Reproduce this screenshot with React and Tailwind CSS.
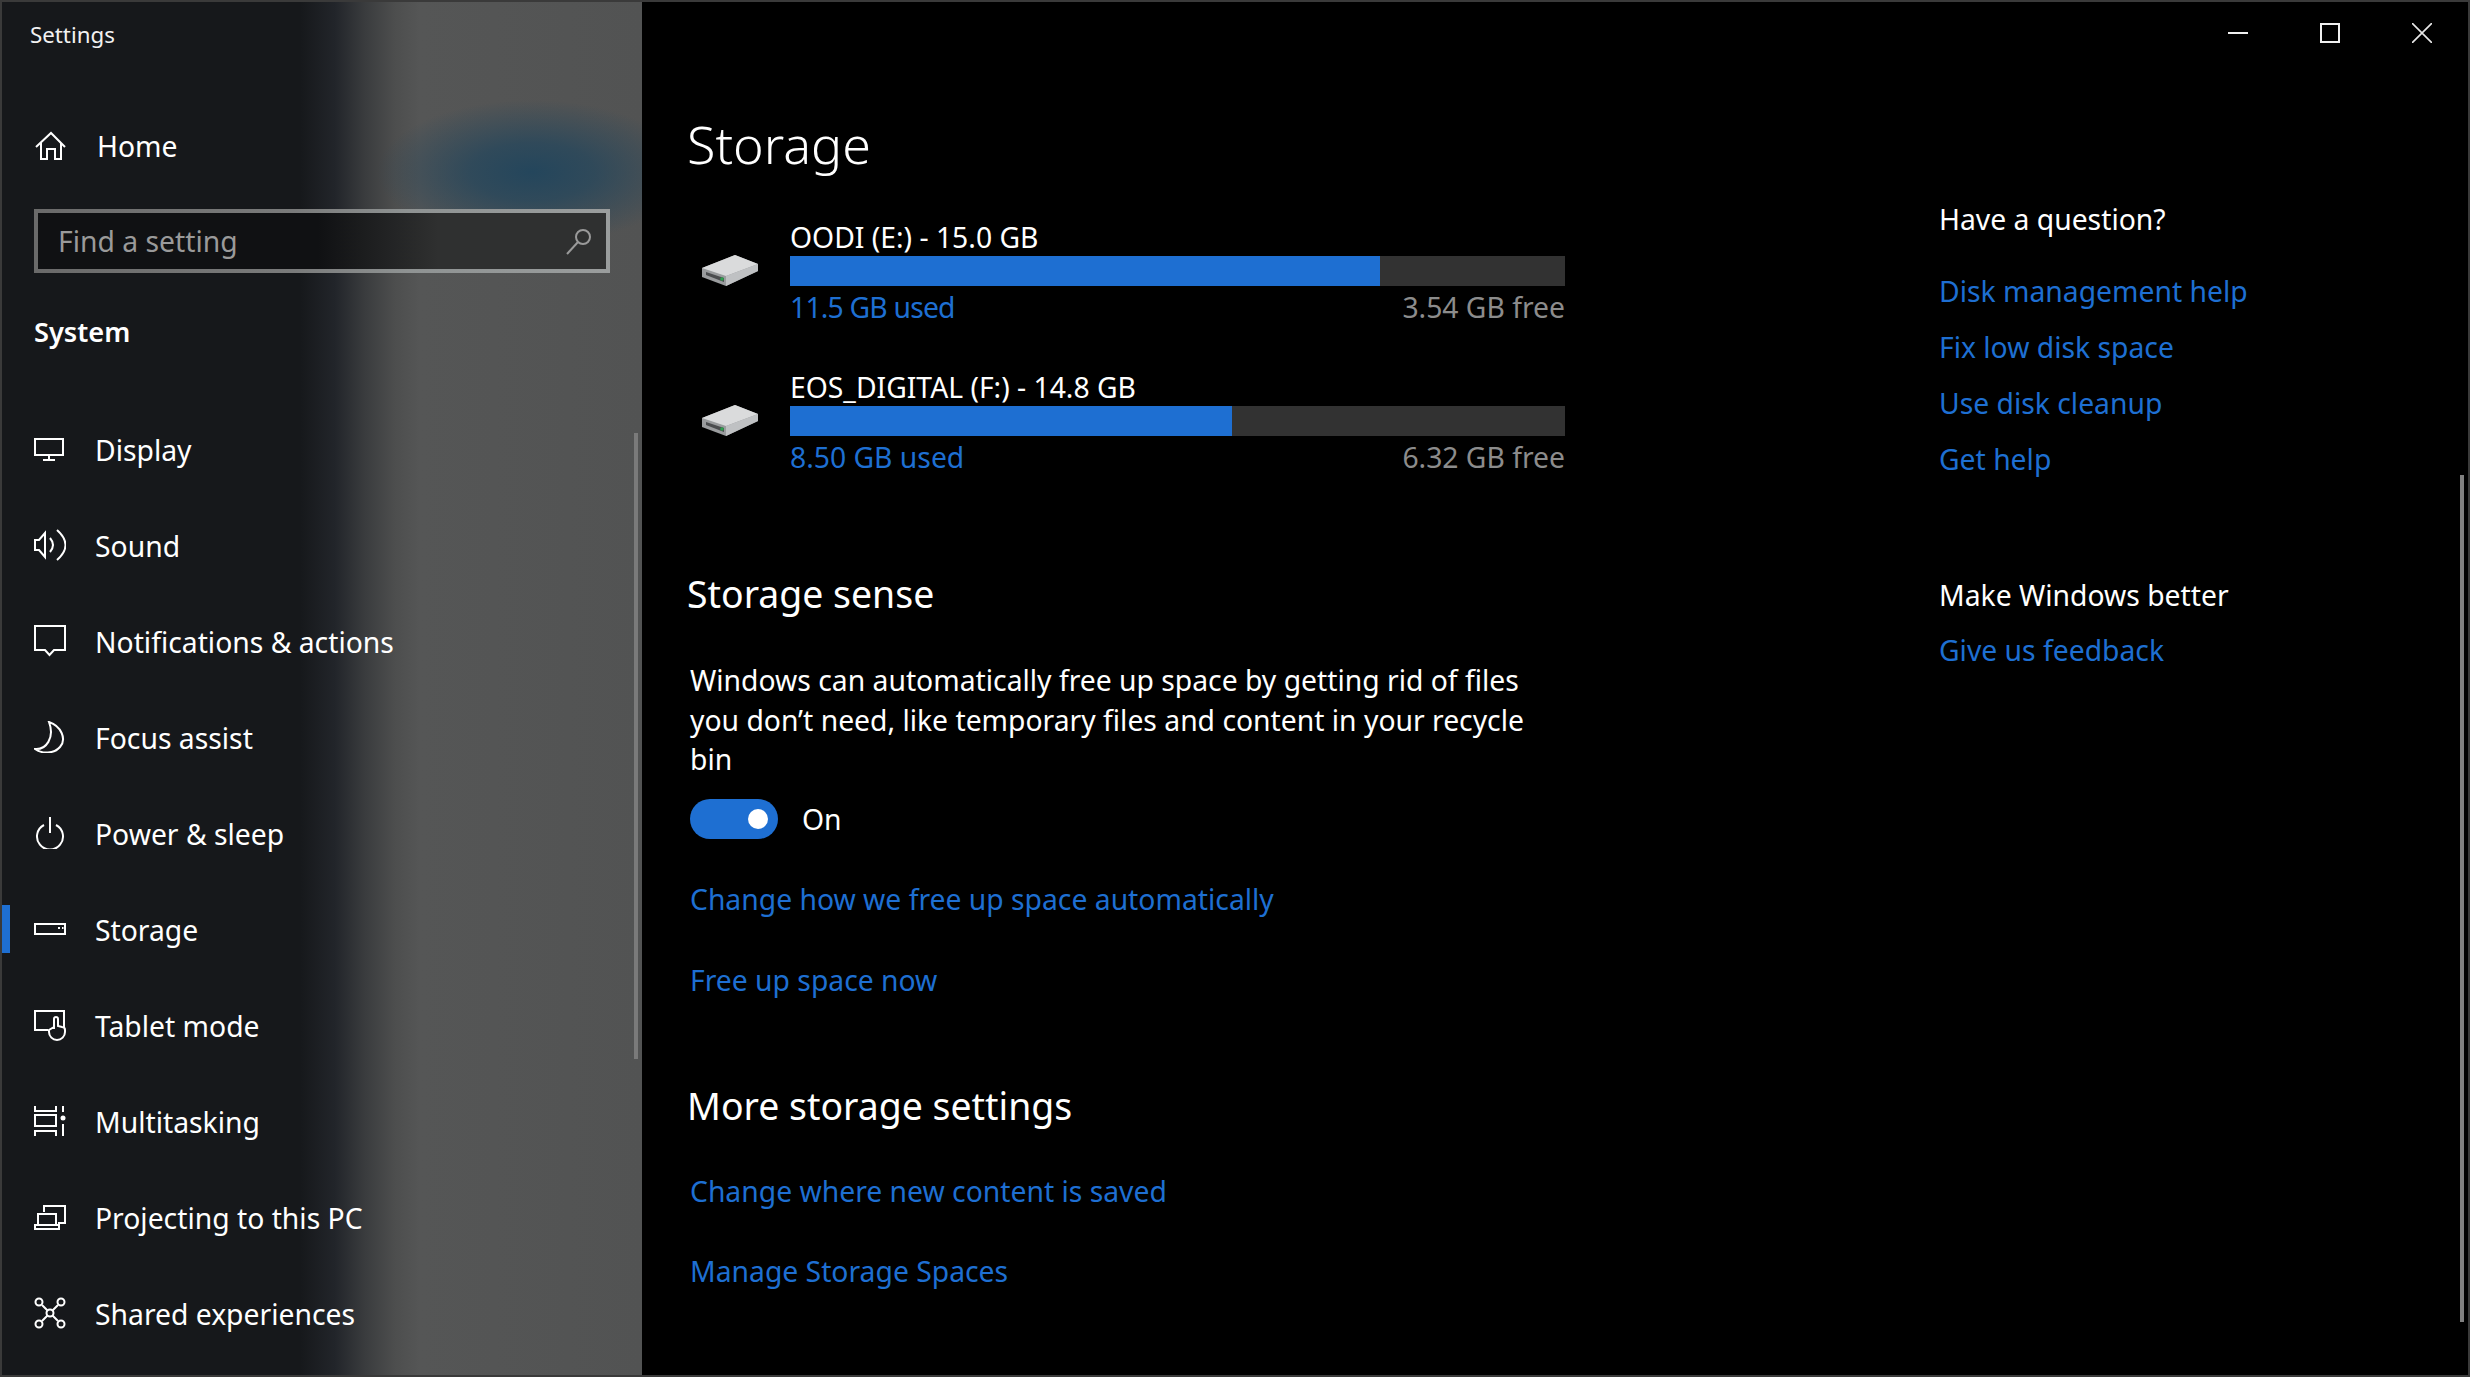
const I = ({ children }) => (
  <svg width="32" height="32" viewBox="0 0 32 32" fill="none" stroke="#fff" strokeWidth="2" className="shrink-0">{children}</svg>
);

const icons = {
  Home: <path d="M2 17 17 3l14 14M7 13v16h6V19h8v10h6V13" />,
  Display: <><path d="M1 6h28v16H1zM15 22v5M9 27h12" /></>,
  Sound: <><path d="M1 11h4l6-7v24l-6-7H1z" /><path d="M16 9q6 7 0 14M23 1q17 15 0 30" /></>,
  Notifications: <path d="M1 1h30v24H20l-4.500 5-4.500-5H1z" />,
  Focus: <path d="M15 1c12 4 18 17 11 25-6 7-18 7-25 2 11 1 20-11 14-27z" />,
  Power: <path d="M10 8a13 13 0 1 0 12 0M16 0v16" />,
  Storage: <><path d="M1 11h30v10H1z" /><path d="M24 15h2M28 15h1.500" /></>,
  Tablet: <><path d="M14 21H1V2h29v17" /><path d="M20 20V10a2 2 0 0 1 4 0v7l4 1a3 3 0 0 1 3 3v2a8 8 0 0 1-16 0v-2l5-3z" fill="#17191c" /></>,
  Multitasking: <><path d="M1 1v5h21V1M1 10h21v11H1zM1 31v-5h21v5M29 1v6M29 19v12" /><circle cx="29" cy="13" r="2.500" fill="#fff" stroke="none" /></>,
  Projecting: <><path d="M10 11V5h21v17h-7M4 24V13h18v11M1 24h24v4H1z" /></>,
  Shared: <><circle cx="5" cy="5" r="3.500" /><circle cx="27" cy="5" r="3.500" /><circle cx="5" cy="27" r="3.500" /><circle cx="27" cy="27" r="3.500" /><circle cx="16" cy="16" r="3.500" /><path d="m8 8 5.500 5.500M24 8l-5.500 5.500M8 24l5.500-5.500M24 24l-5.500-5.500" /></>,
};

const nav = [
  ["Display", "Display"],
  ["Sound", "Sound"],
  ["Notifications", "Notifications & actions"],
  ["Focus", "Focus assist"],
  ["Power", "Power & sleep"],
  ["Storage", "Storage"],
  ["Tablet", "Tablet mode"],
  ["Multitasking", "Multitasking"],
  ["Projecting", "Projecting to this PC"],
  ["Shared", "Shared experiences"],
];

const Drive = () => (
  <svg width="56" height="31" viewBox="0 0 56 31" className="mb-[4px] shrink-0">
    <path d="M0 13 33 0l23 9v7L24 31 0 22z" fill="#9a9c9e" />
    <path d="M0 13 33 0l23 9-32 12z" fill="#dadbdc" />
    <path d="M24 21 56 9v7L24 31z" fill="#bfc1c3" />
    <path d="M4 17l18 6v4L4 20z" fill="#4a4c4e" />
    <circle cx="20" cy="24" r="1.800" fill="#2fa04f" />
  </svg>
);

const Bar = ({ name, used, free, pct, usedCls }) => (
  <div className="flex items-center pl-[15px]">
    <Drive />
    <div className="ml-[32px] w-[775px]">
      <div className="h-[36px] leading-[36px] text-white">{name}</div>
      <div className="mt-px h-[30px] bg-[#323232]">
        <div className="h-full bg-[#1e6fd2]" style={{ width: pct + "%" }} />
      </div>
      <div className="mt-[3px] flex h-[36px] justify-between leading-[36px]">
        <span className={"text-[#1e6fd2] " + usedCls}>{used}</span>
        <span className="text-[#8c8c8c]">{free}</span>
      </div>
    </div>
  </div>
);

const A = ({ children, cls }) => (
  <div className={"h-[40px] leading-[40px] whitespace-nowrap text-[#1e6fd2] " + cls}>{children}</div>
);

export default function App() {
  return (
    <div className="box-border flex h-[1377px] w-[2470px] overflow-hidden border-2 border-[#3a3a3a] bg-black text-[28.300px] text-white [font-family:'Noto_Sans',sans-serif]">
      <aside className="relative h-full w-[640px] shrink-0 overflow-hidden bg-[radial-gradient(ellipse_155px_72px_at_530px_170px,#24465c_0%,rgba(36,70,92,0.75)_40%,rgba(36,70,92,0)_100%),linear-gradient(90deg,#16181b_0,#16181b_298px,#22252a_333px,#3a3c3e_363px,#4d4e4e_393px,#555656_418px,#525353_640px)]">
        <div className="flex h-[66px] items-center pl-[28px] text-[22.300px] text-[#f2f2f2]">Settings</div>
        <div className="mt-[53px] flex h-[50px] items-center gap-[31px] pl-[32px]">
          <I>{icons.Home}</I>
          <span>Home</span>
        </div>
        <div className="mx-[32px] mt-[38px] h-[64px] bg-[linear-gradient(90deg,#6a6a6a,#7a7b7b_45%,#8f9393_65%,#9a9d9d)] p-1">
          <div className="flex h-full items-center justify-between bg-[linear-gradient(90deg,#101113_0,#101113_280px,#2f3030_400px)] pl-[20px] pr-[14px] text-[#9a9a9a]">
            <span>Find a setting</span>
            <svg width="26" height="27" viewBox="0 0 26 27" fill="none" stroke="#9a9a9a" strokeWidth="2">
              <circle cx="17" cy="9" r="7" />
              <path d="M12 14 1 26" />
            </svg>
          </div>
        </div>
        <div className="mt-[39px] h-[40px] pl-[32px] text-[27.200px] font-semibold leading-[40px]">System</div>
        <div className="mt-[49px]">
          {nav.map(([k, label]) => (
            <div key={k} className="relative flex h-[96px] items-center gap-[29px] pl-[32px]">
              {k === "Storage" && <div className="absolute left-0 top-[24px] h-[48px] w-[8px] bg-[#1e6fd2]" />}
              <I>{icons[k]}</I>
              <span className="pt-[3px]">{label}</span>
            </div>
          ))}
        </div>
        <div className="absolute left-[632px] top-[431px] h-[626px] w-1 bg-[#7a7a7a]" />
      </aside>

      <main className="relative flex-1">
        <div className="flex h-[62px] items-center justify-end gap-[72px] pr-[36px]">
          <div className="h-[2px] w-[20px] bg-[#f0f0f0]" />
          <div className="box-border h-[20px] w-[20px] border-2 border-[#f0f0f0]" />
          <svg width="20" height="20" viewBox="0 0 20 20" stroke="#e8e8e8" strokeWidth="1.600"><path d="m0 0 20 20M20 0 0 20" /></svg>
        </div>
        <div className="flex">
          <div className="w-[1297px] pl-[45px]">
            <div className="mt-[50px] h-[60px] text-[52px] font-light leading-[60px]">Storage</div>
            <div className="mt-[45px]">
              <Bar name="OODI (E:) - 15.0 GB" used="11.5 GB used" free="3.54 GB free" pct={76.1} usedCls="tracking-[-0.8px]" />
            </div>
            <div className="mt-[44px]">
              <Bar name="EOS_DIGITAL (F:) - 14.8 GB" used="8.50 GB used" free="6.32 GB free" pct={57} usedCls="" />
            </div>
            <div className="mt-[94px] h-[50px] text-[37.400px] leading-[50px]">Storage sense</div>
            <div className="ml-[3px] mt-[42px] whitespace-nowrap leading-[39.500px]">
              Windows can automatically free up space by getting rid of files<br />
              you don’t need, like temporary files and content in your recycle<br />
              bin
            </div>
            <div className="ml-[3px] mt-[18px] flex items-center gap-[24px]">
              <div className="relative h-[40px] w-[88px] rounded-full bg-[#1e6fd2]">
                <div className="absolute right-[10px] top-[10px] h-[20px] w-[20px] rounded-full bg-white" />
              </div>
              <span>On</span>
            </div>
            <A cls="ml-[3px] mt-[39px]">Change how we free up space automatically</A>
            <A cls="ml-[3px] mt-[41px]">Free up space now</A>
            <div className="mt-[81px] h-[50px] text-[37.400px] leading-[50px]">More storage settings</div>
            <A cls="ml-[3px] mt-[40px]">Change where new content is saved</A>
            <A cls="ml-[3px] mt-[40px]">Manage Storage Spaces</A>
          </div>
          <div>
            <div className="mt-[135px] h-[40px] leading-[40px]">Have a question?</div>
            <div className="mt-[32px] flex flex-col gap-[16px]">
              <A>Disk management help</A>
              <A>Fix low disk space</A>
              <A>Use disk cleanup</A>
              <A>Get help</A>
            </div>
            <div className="mt-[96px] h-[40px] leading-[40px]">Make Windows better</div>
            <A cls="mt-[15px]">Give us feedback</A>
          </div>
        </div>
        <div className="absolute right-[4px] top-[473px] h-[847px] w-1 bg-[#808080]" />
      </main>
    </div>
  );
}
